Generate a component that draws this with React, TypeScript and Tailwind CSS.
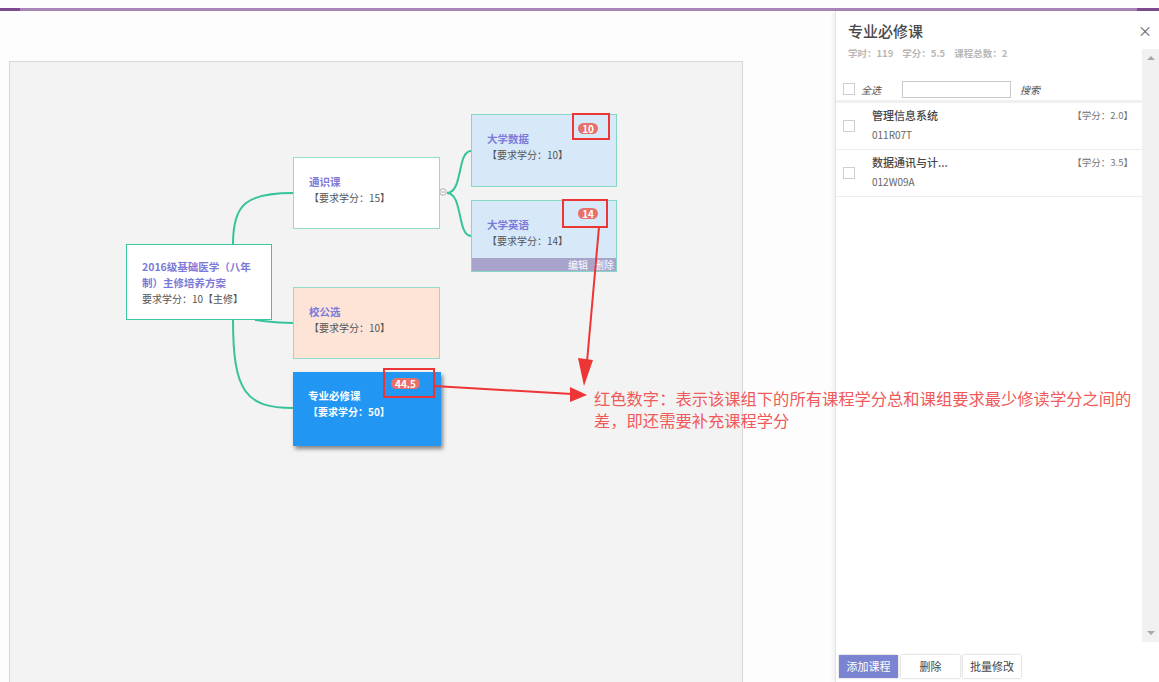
import React from 'react';

const FONT = '"Noto Sans CJK SC", "Noto Sans", Roboto, sans-serif';

interface NodeProps {
  title: string;
  sub: string;
  className: string;
  titleClass?: string;
  subClass?: string;
  badge?: string;
  badgeClass?: string;
  children?: React.ReactNode;
}

function MapNode({ title, sub, className, titleClass, subClass, badge, badgeClass, children }: NodeProps) {
  return (
    <div className={`absolute overflow-hidden ${className}`}>
      <div className="pl-[15px] pt-[16px]">
        <div className={`text-[10.5px] leading-[16px] font-bold ${titleClass ?? 'text-[#7c7ad8]'}`}>{title}</div>
        <div className={`text-[10px] leading-[16px] ${subClass ?? 'text-[#555]'}`}>{sub}</div>
      </div>
      {badge && (
        <span
          className={`absolute rounded-full bg-[#e86f6a] text-white text-[10px] font-bold leading-[11px] px-[4px] ${badgeClass}`}
        >
          {badge}
        </span>
      )}
      {children}
    </div>
  );
}

function Checkbox() {
  return <span className="block w-[12px] h-[12px] border border-[#cfcfcf] bg-white shrink-0" />;
}

const courses = [
  { name: '管理信息系统', code: '011R07T', credit: '2.0' },
  { name: '数据通讯与计...', code: '012W09A', credit: '3.5' },
];

export default function App() {
  return (
    <div className="relative w-[1159px] h-[682px] overflow-hidden bg-[#fdfdfd]" style={{ fontFamily: FONT }}>
      {/* top bar */}
      <div className="flex h-[3px] mt-[8px]">
        <div className="w-[20px] bg-[#7d4a8e]" />
        <div className="flex-1 bg-[#a884b7]" />
        <div className="w-[22px] bg-[#7d4a8e]" />
      </div>

      <div className="flex h-[671px]">
        {/* canvas */}
        <div className="flex-1 pl-[9px] pt-[50px]">
          <div className="relative w-[734px] h-full border border-b-0 border-[#d8d8d8] bg-[#f3f3f3]">
            <svg className="absolute inset-0" width="732" height="620" fill="none">
              <g stroke="#36c39c" strokeWidth="2">
                <path d="M223 182 C223 142 236 131 283 131" />
                <path d="M223 258 C223 330 236 346 283 346" />
                <path d="M245 258 C262 260 268 261 283 261" />
                <path d="M437 131 C453 131 447 89 461 89" />
                <path d="M437 131 C453 131 447 174 461 174" />
              </g>
              <circle cx="433" cy="130" r="3.2" fill="#fff" stroke="#999" strokeWidth="0.8" />
              <path d="M431.3 130 H434.7" stroke="#888" strokeWidth="0.8" />
            </svg>

            <MapNode
              title="2016级基础医学（八年制）主修培养方案"
              sub="要求学分：10【主修】"
              className="left-[116px] top-[182px] w-[146px] h-[76px] bg-white border border-[#3dc4a0]"
              titleClass="text-[#7c7ad8] w-[118px] !leading-[16px] -mt-[2px]"
            />
            <MapNode
              title="通识课"
              sub="【要求学分：15】"
              className="left-[283px] top-[95px] w-[147px] h-[72px] bg-white border border-[#93dccb]"
            />
            <MapNode
              title="大学数据"
              sub="【要求学分：10】"
              badge="10"
              badgeClass="right-[18px] top-[8px]"
              className="left-[461px] top-[52px] w-[146px] h-[73px] bg-[#d7e8f9] border border-[#86d6c6]"
            />
            <MapNode
              title="大学英语"
              sub="【要求学分：14】"
              badge="14"
              badgeClass="right-[18px] top-[7px]"
              className="left-[461px] top-[138px] w-[146px] h-[72px] bg-[#d7e8f9] border border-[#86d6c6]"
            >
              <div className="absolute left-0 right-0 bottom-0 h-[13px] bg-[#a9a4cb] flex justify-end items-center gap-[6px] pr-[2px] text-[10px] leading-[12px] text-white">
                <span>编辑</span>
                <span>删除</span>
              </div>
            </MapNode>
            <MapNode
              title="校公选"
              sub="【要求学分：10】"
              className="left-[283px] top-[225px] w-[147px] h-[72px] bg-[#fde4d7] border border-[#93dccb]"
            />
            <MapNode
              title="专业必修课"
              sub="【要求学分：50】"
              badge="44.5"
              badgeClass="right-[21px] top-[6px]"
              titleClass="text-white"
              subClass="text-white font-bold"
              className="left-[283px] top-[310px] w-[148px] h-[74px] bg-[#2196f3] shadow-[2px_3px_4px_rgba(0,0,0,0.45)] !overflow-visible"
            />
          </div>
        </div>

        {/* right panel */}
        <aside className="relative w-[324px] h-full bg-white border-l border-[#e2e2e2] shadow-[-2px_0_4px_rgba(0,0,0,0.06)] flex flex-col">
          <div className="h-[36px] pl-[12px] pt-[10px]">
            <div className="text-[15px] leading-[20px] text-[#4a4a4a] font-medium">专业必修课</div>
          </div>
          <span className="absolute right-[7px] top-[11px] text-[14px] leading-[16px] text-[#666]">×</span>

          <div className="flex h-[595px]">
            <div className="flex-1 flex flex-col">
              <div className="pl-[12px] text-[9.5px] leading-[12px] font-bold text-[#b8b8b8] flex gap-[9px]">
                <span>学时：119</span>
                <span>学分：5.5</span>
                <span>课程总数：2</span>
              </div>
              <div className="mt-[20px] h-[20px] flex items-center pl-[7px]">
                <Checkbox />
                <span className="ml-[6px] text-[10px] italic text-[#555]">全选</span>
                <span className="ml-[21px] w-[109px] h-[17px] border border-[#c9c9c9] bg-white" />
                <span className="ml-[9px] text-[10px] italic text-[#555]">搜索</span>
              </div>
              <div className="mt-[1px] h-[3px] bg-[#f0f0f0]" />
              {courses.map((c) => (
                <div key={c.code} className="flex items-center h-[47px] pl-[7px] pr-[9px] border-b border-[#ececec]">
                  <Checkbox />
                  <div className="flex-1 ml-[17px] -mt-[3px]">
                    <div className="flex justify-between items-center">
                      <span className="text-[11px] leading-[14px] font-medium text-[#444]">{c.name}</span>
                      <span className="text-[9.5px] leading-[14px] text-[#777]">【学分：{c.credit}】</span>
                    </div>
                    <div className="mt-[6px] text-[10px] leading-[14px] text-[#666]">{c.code}</div>
                  </div>
                </div>
              ))}
            </div>
            <div className="w-[17px] mt-[2px] bg-[#f1f1f1] flex flex-col items-center justify-between py-[7px]">
              <span className="w-0 h-0 border-l-[4px] border-r-[4px] border-b-[4px] border-l-transparent border-r-transparent border-b-[#a8a8a8]" />
              <span className="w-0 h-0 border-l-[4px] border-r-[4px] border-t-[4px] border-l-transparent border-r-transparent border-t-[#a8a8a8]" />
            </div>
          </div>

          <div className="flex gap-[3px] pl-[3px] pt-[13px]">
            <button className="w-[59px] h-[23px] bg-[#7a84d1] text-white text-[11px] shadow-[0_0_2px_rgba(0,0,0,0.25)]">添加课程</button>
            <button className="w-[59px] h-[23px] bg-white text-[#444] text-[11px] shadow-[0_0_2px_rgba(0,0,0,0.3)]">删除</button>
            <button className="w-[58px] h-[23px] bg-white text-[#444] text-[11px] shadow-[0_0_2px_rgba(0,0,0,0.3)]">批量修改</button>
          </div>
        </aside>
      </div>

      {/* annotation overlay */}
      <svg className="absolute inset-0 pointer-events-none" width="1159" height="682" fill="none">
        <g stroke="#ee3535" strokeWidth="2">
          <rect x="573" y="114" width="36" height="25" />
          <rect x="563" y="200" width="44" height="27" />
          <rect x="384" y="369" width="50" height="28" />
          <path d="M599 227 L587 362" />
          <path d="M434 386 L572 394" />
        </g>
        <polygon points="578,358 593,360 584,386" fill="#ee3535" />
        <polygon points="570,387 570,402 587,395" fill="#ee3535" />
      </svg>
      <div className="absolute left-[594px] top-[387px] w-[560px] text-[16.3px] leading-[22px] text-[#f05a5a]">
        红色数字：表示该课组下的所有课程学分总和课组要求最少修读学分之间的
        <br />
        差，即还需要补充课程学分
      </div>
    </div>
  );
}
